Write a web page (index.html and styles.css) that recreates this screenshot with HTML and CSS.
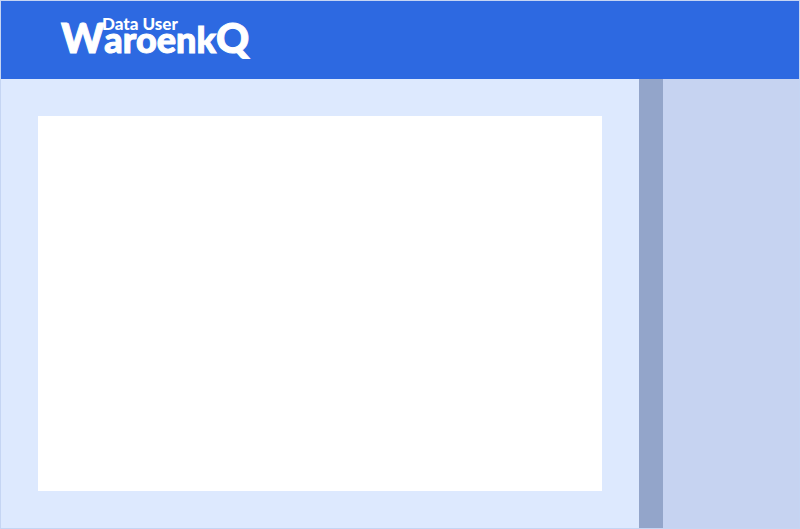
FILE: index.html
```html
<!DOCTYPE html>
<html lang="id">
<head>
<meta charset="utf-8">
<meta name="viewport" content="width=device-width, initial-scale=1">
<title>Data User WaroenkQ</title>
<link rel="stylesheet" href="styles.css">
</head>
<body>
<header class="header">
  <h1 class="brand">
    <span class="brand-label">Data User</span>
    <span class="brand-name"><span class="brand-cap">W</span>aroenk<span class="brand-cap">Q</span></span>
  </h1>
</header>
<div class="layout">
  <main class="content">
    <section class="panel" aria-label="Data User"></section>
  </main>
  <div class="divider"></div>
  <aside class="sidebar"></aside>
</div>
</body>
</html>
```
FILE: styles.css
```css
* {
  box-sizing: border-box;
}

body {
  margin: 0;
  min-height: 100vh;
  display: flex;
  flex-direction: column;
  font-family: Lato, "Liberation Sans", sans-serif;
  border: 1px solid #c5d5f3;
}

.header {
  min-height: 78px;
  background: #2d69e1;
  color: #fff;
  padding: 16px 60px 0;
}

.brand {
  margin: 0;
  display: flex;
  flex-direction: column;
  font-weight: 900;
}

.brand-label {
  padding-left: 41px;
  font-size: 17px;
  line-height: 14px;
}

/* The name tucks up under the label, between its tall W and k. */
.brand-name {
  font-size: 36px;
  line-height: 14px;
  -webkit-text-stroke: 1px currentColor;
}

.brand-cap {
  font-size: 41px;
}

.layout {
  flex: 1;
  display: flex;
}

.content {
  flex: 1;
  display: flex;
  padding: 37px;
  background: #dde9fe;
}

.panel {
  flex: 1;
  background: #fff;
}

.divider {
  width: 24px;
  background: #93a5ca;
}

.sidebar {
  width: 17%;
  background: #c6d3f1;
}
```
